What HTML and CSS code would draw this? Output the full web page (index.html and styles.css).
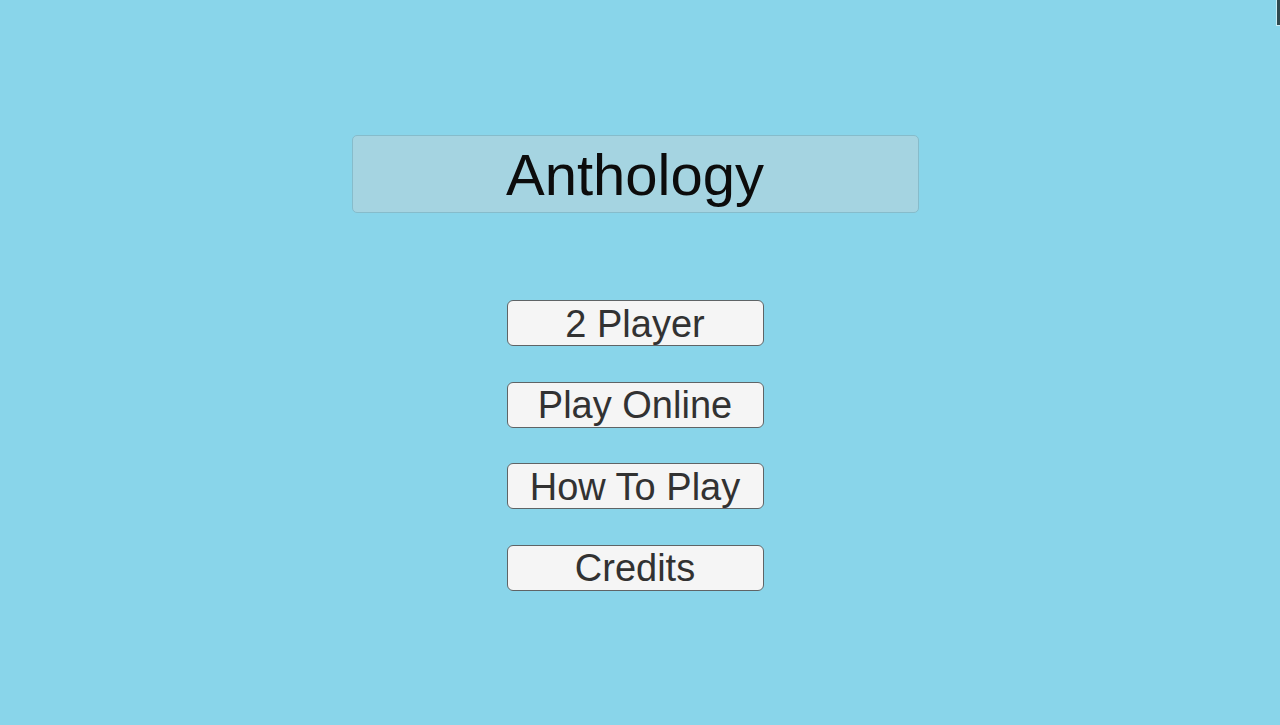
FILE: index.html
```html
<!DOCTYPE html>
<html>
<head>
	<title>Anthology</title>
	<meta charset="UTF-8">
	<meta name="viewport" content="width=device-width, initial-scale=1.0">
	<link rel="stylesheet" href="styles.css">
</head>
<body>
	<div class="menu">
		<h1 class="title">Anthology</h1>
		<ul class="menu-buttons">
			<li><button type="button">2 Player</button></li>
			<li><button type="button">Play Online</button></li>
			<li><button type="button">How To Play</button></li>
			<li><button type="button">Credits</button></li>
		</ul>
	</div>
	<div class="corner-handle"></div>
</body>
</html>
```

FILE: styles.css
```css
body {
	margin: 0;
	padding: 0;
	min-height: 100vh;
	background-color: #89d5ea;
	font-family: "Liberation Sans", Arial, sans-serif;
	overflow: hidden;
}
.menu {
	display: flex;
	flex-direction: column;
	align-items: center;
	padding: 135px 10px 0 0;
}
.title {
	box-sizing: border-box;
	width: 567px;
	height: 78px;
	margin: 0 0 87px 0;
	padding-top: 2px;
	display: flex;
	align-items: center;
	justify-content: center;
	background-color: #a5d4e1;
	border: 1px solid #86bccb;
	border-radius: 5px;
	color: #0c0c0c;
	font-weight: normal;
	font-size: 58px;
	line-height: 1;
}
.menu-buttons {
	list-style: none;
	margin: 0;
	padding: 0;
	display: flex;
	flex-direction: column;
	gap: 35.5px;
}
.menu-buttons button {
	box-sizing: border-box;
	width: 257px;
	height: 46px;
	padding: 1px 0 0 0;
	display: flex;
	align-items: center;
	justify-content: center;
	background-color: #f5f5f5;
	border: 1px solid #5f6466;
	border-radius: 6px;
	color: #323232;
	font-family: inherit;
	font-size: 38px;
	line-height: 1;
	cursor: pointer;
}
.menu-buttons button:hover {
	background-color: #ffffff;
}
.corner-handle {
	position: absolute;
	top: 0;
	right: 0;
	width: 3px;
	height: 25px;
	background-color: #2f4a4f;
	border-left: 1px solid #c9eef5;
	border-bottom: 1px solid #c9eef5;
}
```
